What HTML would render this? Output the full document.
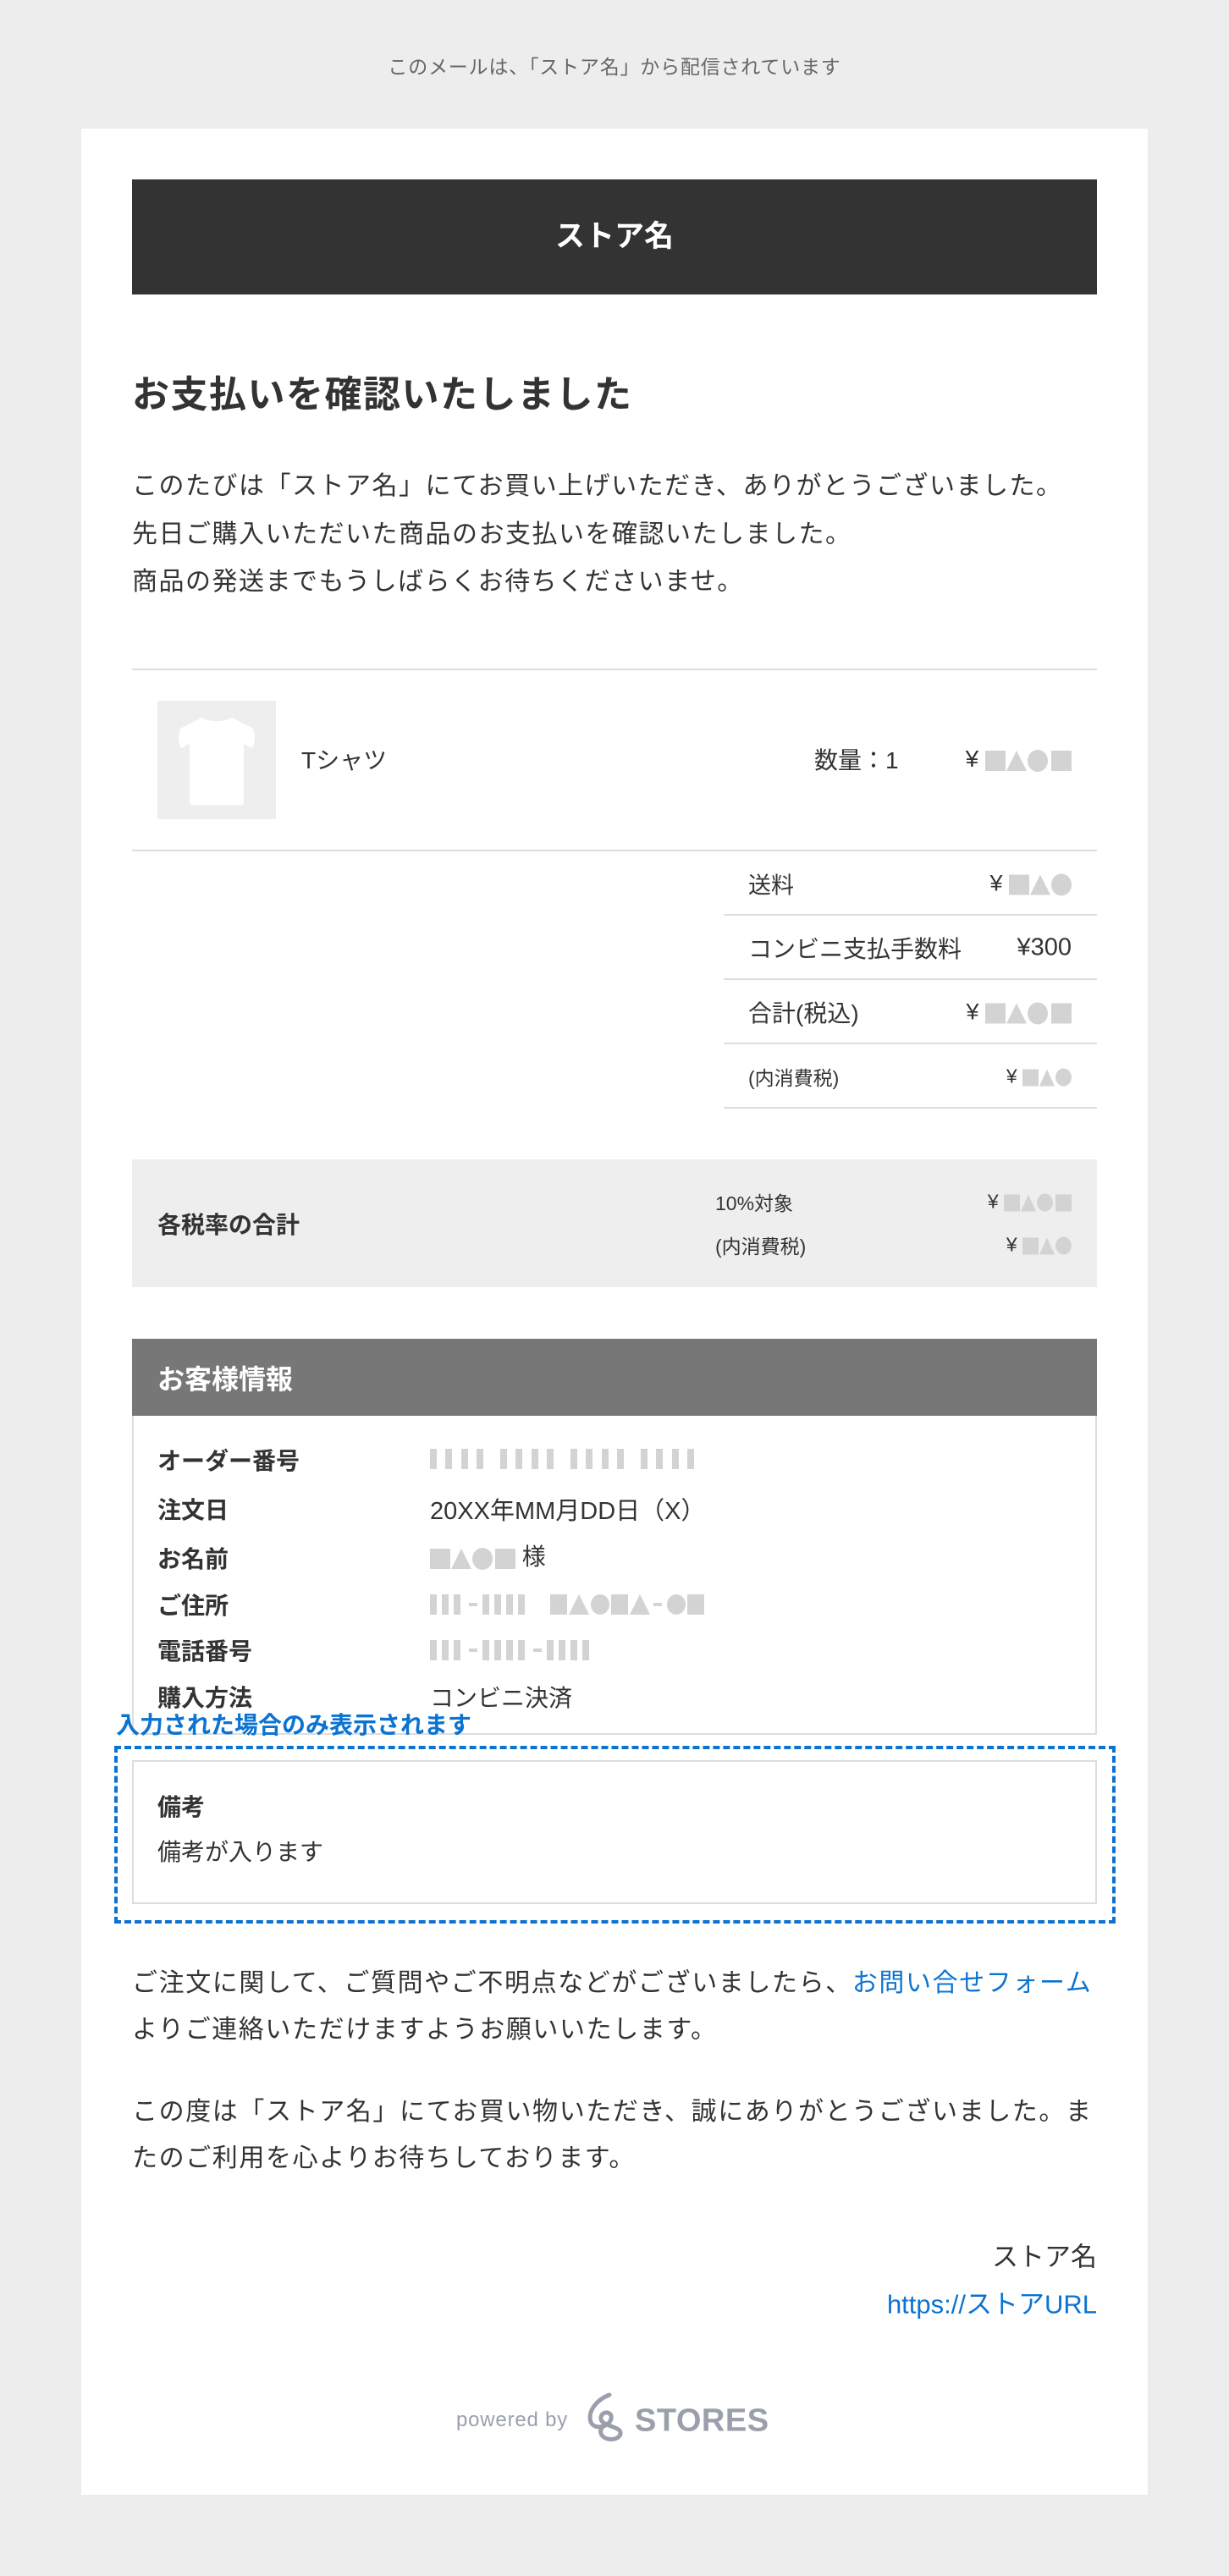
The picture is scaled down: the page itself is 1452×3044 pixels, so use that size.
<!DOCTYPE html>
<html><head><meta charset="utf-8">
<style>
*{margin:0;padding:0;box-sizing:border-box}
body{width:1452px;height:3044px;background:#ededed;font-family:"Liberation Sans","Noto Sans CJK JP",sans-serif;color:#333;position:relative;overflow:hidden}
.a{position:absolute;white-space:nowrap}
.card{position:absolute;left:96px;top:152px;width:1260px;height:2796px;background:#fff}
.sq,.tr,.ci{display:inline-block;vertical-align:middle;background:#d3d3d3}
.tr{background:none;width:0;height:0;border-left:12px solid transparent;border-right:12px solid transparent;border-bottom:24px solid #d3d3d3}
.ci{border-radius:50%}
.line{position:absolute;height:2px;background:#ddd}
.vc{transform:translateY(-50%)}
.bar{position:absolute;width:8px;height:24px;background:#d3d3d3}
.blue{color:#0b73d1}
</style></head><body>
<div class="a vc" style="left:0;width:1452px;text-align:center;top:77px;font-size:23px;color:#666;letter-spacing:0.8px">このメールは、「ストア名」から配信されています</div>
<div class="card"></div>
<div class="a" style="left:156px;top:212px;width:1140px;height:136px;background:#333;color:#fff;font-size:35px;font-weight:bold;text-align:center;line-height:136px">ストア名</div>
<div class="a vc" style="left:156px;top:462px;font-size:44px;font-weight:bold;letter-spacing:1.5px">お支払いを確認いたしました</div>
<div class="a vc" style="left:156px;top:571px;font-size:30px;letter-spacing:1.5px">このたびは「ストア名」にてお買い上げいただき、ありがとうございました。</div>
<div class="a vc" style="left:156px;top:628px;font-size:30px;letter-spacing:1.5px">先日ご購入いただいた商品のお支払いを確認いたしました。</div>
<div class="a vc" style="left:156px;top:684px;font-size:30px;letter-spacing:1.5px">商品の発送までもうしばらくお待ちくださいませ。</div>
<div class="line" style="left:156px;top:790px;width:1140px"></div>
<div class="a" style="left:186px;top:828px;width:140px;height:140px;background:#eee">
<svg width="140" height="140" viewBox="0 0 140 140"><path d="M52 27 Q70 36 88 27 L112 40 Q118 52 112 66 L102 60 L102 134 Q102 138 98 138 L43 138 Q38 138 38 134 L38 60 L28 66 Q22 52 28 40 Z" fill="#fff" transform="translate(0,-5) scale(1,0.93)"/></svg></div>
<div class="a vc" style="left:356px;top:897px;font-size:28px">Tシャツ</div>
<div class="a vc" style="left:962px;top:897px;font-size:28px">数量：1</div>
<div class="a vc" style="right:186px;top:897px;font-size:28px">¥ <span class="sq" style="width:24px;height:24px"></span><span class="tr" style="margin:0 1px"></span><span class="ci" style="width:24px;height:26px"></span><span class="sq" style="width:24px;height:24px;margin-left:4px"></span></div>
<div class="line" style="left:156px;top:1004px;width:1140px"></div>
<div class="a vc" style="left:884px;top:1044px;font-size:27px">送料</div>
<div class="a vc" style="right:186px;top:1044px;font-size:27px">¥ <span class="sq" style="width:24px;height:24px"></span><span class="tr" style="margin:0 1px"></span><span class="ci" style="width:24px;height:26px"></span></div>
<div class="line" style="left:855px;top:1080px;width:441px"></div>
<div class="a vc" style="left:884px;top:1120px;font-size:28px">コンビニ支払手数料</div>
<div class="a vc" style="right:186px;top:1120px;font-size:29px">¥300</div>
<div class="line" style="left:855px;top:1156px;width:441px"></div>
<div class="a vc" style="left:884px;top:1196px;font-size:28px">合計(税込)</div>
<div class="a vc" style="right:186px;top:1196px;font-size:27px">¥ <span class="sq" style="width:24px;height:24px"></span><span class="tr" style="margin:0 1px"></span><span class="ci" style="width:24px;height:26px"></span><span class="sq" style="width:24px;height:24px;margin-left:4px"></span></div>
<div class="line" style="left:855px;top:1232px;width:441px"></div>
<div class="a vc" style="left:884px;top:1272px;font-size:23px">(内消費税)</div>
<div class="a vc" style="right:186px;top:1272px;font-size:23px">¥ <span class="sq" style="width:19px;height:20px"></span><span class="tr" style="border-left-width:9px;border-right-width:9px;border-bottom-width:20px;margin:0 1px"></span><span class="ci" style="width:19px;height:21px"></span></div>
<div class="line" style="left:855px;top:1308px;width:441px"></div>
<div class="a" style="left:156px;top:1370px;width:1140px;height:151px;background:#eee"></div>
<div class="a vc" style="left:186px;top:1446px;font-size:28px;font-weight:bold">各税率の合計</div>
<div class="a vc" style="left:845px;top:1420px;font-size:23px">10%対象</div>
<div class="a vc" style="right:186px;top:1420px;font-size:23px">¥ <span class="sq" style="width:19px;height:20px"></span><span class="tr" style="border-left-width:9px;border-right-width:9px;border-bottom-width:20px;margin:0 1px"></span><span class="ci" style="width:19px;height:21px"></span><span class="sq" style="width:19px;height:20px;margin-left:3px"></span></div>
<div class="a vc" style="left:845px;top:1471px;font-size:23px">(内消費税)</div>
<div class="a vc" style="right:186px;top:1471px;font-size:23px">¥ <span class="sq" style="width:19px;height:20px"></span><span class="tr" style="border-left-width:9px;border-right-width:9px;border-bottom-width:20px;margin:0 1px"></span><span class="ci" style="width:19px;height:21px"></span></div>
<div class="a" style="left:156px;top:1582px;width:1140px;height:91px;background:#777"></div>
<div class="a vc" style="left:186px;top:1628px;font-size:32px;font-weight:bold;color:#fff">お客様情報</div>
<div class="a" style="left:156px;top:1673px;width:1140px;height:377px;border:2px solid #ddd;border-top:none"></div>
<div class="a vc" style="left:186px;top:1725px;font-size:28px;font-weight:bold">オーダー番号</div>
<div class="a vc" style="left:186px;top:1783px;font-size:28px;font-weight:bold">注文日</div>
<div class="a vc" style="left:186px;top:1841px;font-size:28px;font-weight:bold">お名前</div>
<div class="a vc" style="left:186px;top:1896px;font-size:28px;font-weight:bold">ご住所</div>
<div class="a vc" style="left:186px;top:1950px;font-size:28px;font-weight:bold">電話番号</div>
<div class="a vc" style="left:186px;top:2005px;font-size:28px;font-weight:bold">購入方法</div>
<div class="bar" style="left:508px;top:1712px"></div><div class="bar" style="left:526px;top:1712px"></div><div class="bar" style="left:545px;top:1712px"></div><div class="bar" style="left:563px;top:1712px"></div>
<div class="bar" style="left:591px;top:1712px"></div><div class="bar" style="left:609px;top:1712px"></div><div class="bar" style="left:628px;top:1712px"></div><div class="bar" style="left:646px;top:1712px"></div>
<div class="bar" style="left:674px;top:1712px"></div><div class="bar" style="left:692px;top:1712px"></div><div class="bar" style="left:711px;top:1712px"></div><div class="bar" style="left:729px;top:1712px"></div>
<div class="bar" style="left:757px;top:1712px"></div><div class="bar" style="left:775px;top:1712px"></div><div class="bar" style="left:794px;top:1712px"></div><div class="bar" style="left:812px;top:1712px"></div>
<div class="a vc" style="left:508px;top:1783px;font-size:29px">20XX年MM月DD日（X）</div>
<div class="a vc" style="left:508px;top:1838px;font-size:28px"><span class="sq" style="width:24px;height:24px"></span><span class="tr" style="margin:0 1px"></span><span class="ci" style="width:24px;height:26px"></span><span class="sq" style="width:24px;height:24px;margin-left:3px"></span> 様</div>
<div class="a" style="left:508px;top:1884px;height:24px;width:360px">
<span class="bar" style="left:0;top:0"></span><span class="bar" style="left:14px"></span><span class="bar" style="left:28px"></span>
<span class="bar" style="left:46px;top:10px;width:10px;height:4px"></span>
<span class="bar" style="left:62px"></span><span class="bar" style="left:76px"></span><span class="bar" style="left:90px"></span><span class="bar" style="left:104px"></span>
<span class="sq a" style="left:142px;top:0;width:20px;height:24px"></span>
<span class="tr a" style="left:164px;top:0"></span>
<span class="ci a" style="left:190px;top:0;width:22px;height:24px"></span>
<span class="sq a" style="left:214px;top:0;width:20px;height:24px"></span>
<span class="tr a" style="left:236px;top:0"></span>
<span class="bar" style="left:264px;top:10px;width:10px;height:4px"></span>
<span class="ci a" style="left:280px;top:0;width:22px;height:24px"></span>
<span class="sq a" style="left:304px;top:0;width:20px;height:24px"></span>
</div>
<div class="a" style="left:508px;top:1938px;height:24px;width:300px">
<span class="bar" style="left:0"></span><span class="bar" style="left:14px"></span><span class="bar" style="left:28px"></span>
<span class="bar" style="left:46px;top:10px;width:10px;height:4px"></span>
<span class="bar" style="left:62px"></span><span class="bar" style="left:76px"></span><span class="bar" style="left:90px"></span><span class="bar" style="left:104px"></span>
<span class="bar" style="left:122px;top:10px;width:10px;height:4px"></span>
<span class="bar" style="left:138px"></span><span class="bar" style="left:152px"></span><span class="bar" style="left:166px"></span><span class="bar" style="left:180px"></span>
</div>
<div class="a vc" style="left:508px;top:2005px;font-size:28px">コンビニ決済</div>
<div class="a vc blue" style="left:137px;top:2037px;font-size:28px;font-weight:bold">入力された場合のみ表示されます</div>
<div class="a" style="left:135px;top:2063px;width:1183px;height:210px;border:4px dashed #0b73d1"></div>
<div class="a" style="left:156px;top:2080px;width:1140px;height:170px;border:2px solid #ddd"></div>
<div class="a vc" style="left:186px;top:2134px;font-size:28px;font-weight:bold">備考</div>
<div class="a vc" style="left:186px;top:2187px;font-size:28px">備考が入ります</div>
<div class="a vc" style="left:156px;top:2340px;font-size:30px;letter-spacing:1.6px">ご注文に関して、ご質問やご不明点などがございましたら、<span class="blue">お問い合せフォーム</span></div>
<div class="a vc" style="left:156px;top:2395px;font-size:30px;letter-spacing:1.6px">よりご連絡いただけますようお願いいたします。</div>
<div class="a vc" style="left:156px;top:2492px;font-size:30px;letter-spacing:1.6px">この度は「ストア名」にてお買い物いただき、誠にありがとうございました。ま</div>
<div class="a vc" style="left:156px;top:2547px;font-size:30px;letter-spacing:1.6px">たのご利用を心よりお待ちしております。</div>
<div class="a vc" style="right:156px;top:2664px;font-size:31px">ストア名</div>
<div class="a vc blue" style="right:156px;top:2720px;font-size:31px">https://ストアURL</div>
<div class="a vc" style="left:539px;top:2860px;font-size:24px;color:#9aa0ab;letter-spacing:0.8px">powered by</div>
<svg class="a" style="left:690px;top:2826px" width="50" height="62" viewBox="0 0 50 62"><path d="M30 4 C14 10 4 24 8 36 C12 46 30 42 32 32 C34 24 22 22 20 30 C18 40 36 40 42 46 C46 52 38 58 28 56 C20 54 16 46 24 40" fill="none" stroke="#9aa0ab" stroke-width="5" stroke-linecap="round"/></svg>
<div class="a vc" style="left:750px;top:2861px;font-size:38px;font-weight:bold;color:#9aa0ab;letter-spacing:0.5px">STORES</div>
</body></html>
